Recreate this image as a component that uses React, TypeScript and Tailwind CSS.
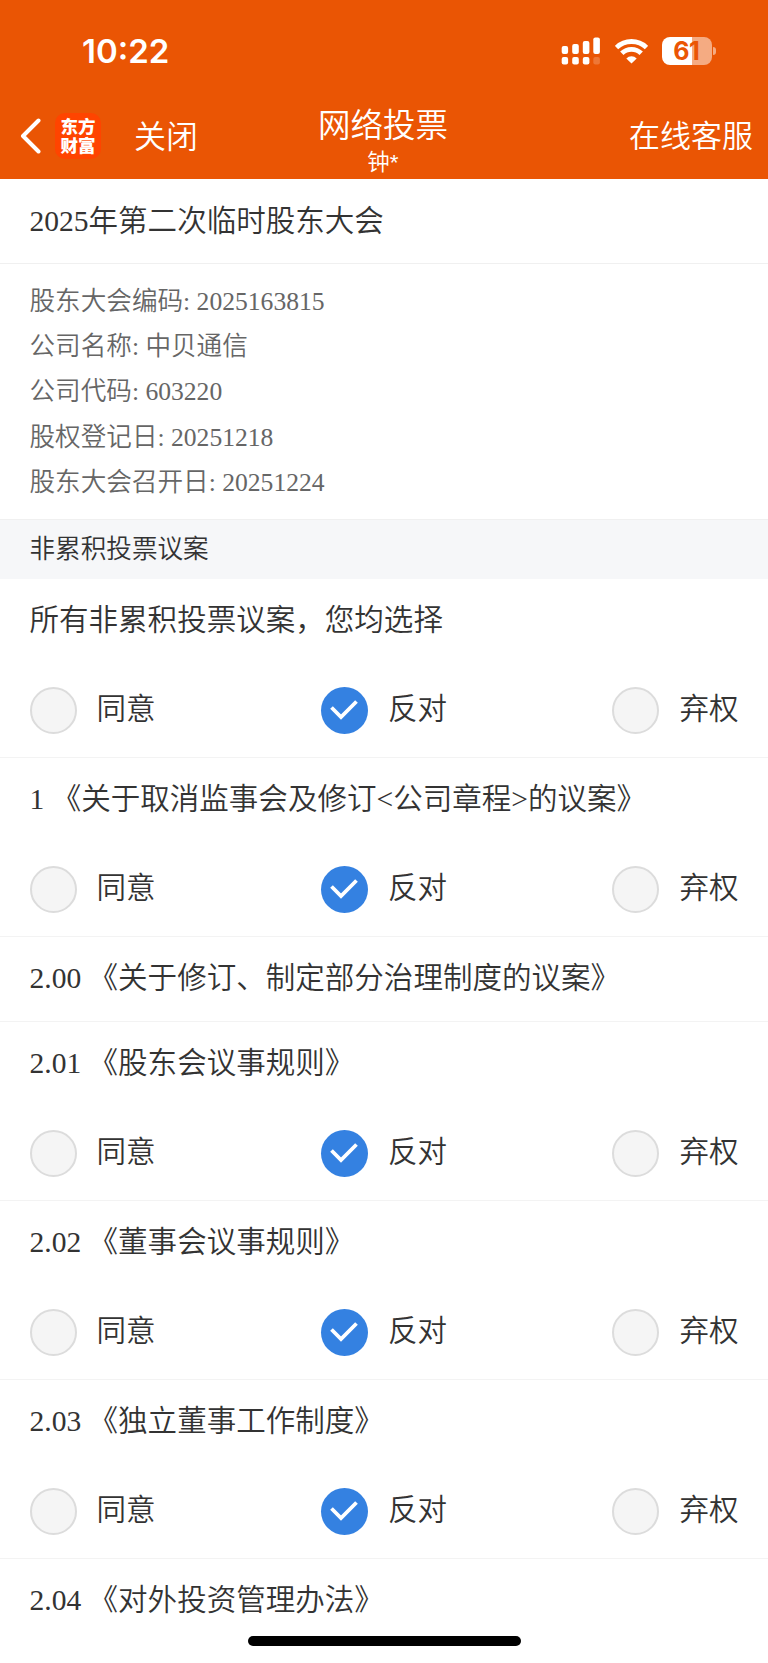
type Choice = 'agree' | 'against' | 'abstain';

type Proposal = {
  id: string;
  title: string;
  choice?: Choice;
};

const choices: Array<{ value: Choice; label: string }> = [
  { value: 'agree', label: '同意' },
  { value: 'against', label: '反对' },
  { value: 'abstain', label: '弃权' },
];

const meetingInfo = [
  { label: '股东大会编码', value: '2025163815' },
  { label: '公司名称', value: '中贝通信' },
  { label: '公司代码', value: '603220' },
  { label: '股权登记日', value: '20251218' },
  { label: '股东大会召开日', value: '20251224' },
];

const proposals: Proposal[] = [
  { id: 'all', title: '所有非累积投票议案，您均选择', choice: 'against' },
  {
    id: '1',
    title: '1 《关于取消监事会及修订<公司章程>的议案》',
    choice: 'against',
  },
  { id: '2.00', title: '2.00 《关于修订、制定部分治理制度的议案》' },
  { id: '2.01', title: '2.01 《股东会议事规则》', choice: 'against' },
  { id: '2.02', title: '2.02 《董事会议事规则》', choice: 'against' },
  { id: '2.03', title: '2.03 《独立董事工作制度》', choice: 'against' },
  { id: '2.04', title: '2.04 《对外投资管理办法》' },
];

function SignalIcon() {
  return (
    <svg width="39" height="28" viewBox="0 0 39 28" fill="#fff">
      <rect x="0.7" y="9" width="6.4" height="8" rx="2" />
      <rect x="11.2" y="7" width="6.6" height="10" rx="2" />
      <rect x="21.8" y="4" width="6.6" height="13" rx="2" />
      <rect x="32.3" y="0.5" width="6.6" height="16.5" rx="2" />
      <rect x="0.7" y="20" width="6.4" height="7.6" rx="2" />
      <rect x="11.2" y="20" width="6.6" height="7.6" rx="2" />
      <rect x="21.8" y="20" width="6.6" height="7.6" rx="2" />
      <rect x="32.3" y="20" width="6.6" height="7.6" rx="2" opacity="0.2" />
    </svg>
  );
}

function WifiIcon() {
  return (
    <svg width="33" height="25" viewBox="0 0 33 25" fill="none" stroke="#fff">
      <path d="M1.5 8.6a21.5 21.5 0 0 1 30 0" strokeWidth="4.8" />
      <path d="M6.8 14.3a13.8 13.8 0 0 1 19.4 0" strokeWidth="4.8" />
      <path
        d="M16.5 24.6 11.3 19.4a7.4 7.4 0 0 1 10.4 0Z"
        fill="#fff"
        stroke="none"
      />
    </svg>
  );
}

function Battery() {
  return (
    <div className="flex items-center gap-[1.5px]">
      <div className="flex h-7 w-[49.5px] items-center justify-center rounded-[8px] bg-linear-to-r from-white from-61% to-[#f5ab82] to-61% pr-px font-['Inter',sans-serif] text-[25px] leading-7 font-bold tracking-[-0.5px] text-[#ea5504]">
        61
      </div>
      <div className="h-2 w-[3px] rounded-r-full bg-[#f5ab82]" />
    </div>
  );
}

function Header() {
  return (
    <header className="h-[179px] bg-[#ea5504] text-white">
      <div className="flex h-[93px] items-center justify-between pt-[9px] pr-[52px] pl-[82px]">
        <span className="font-['Inter',sans-serif] text-[33px] leading-10 font-semibold">
          10:22
        </span>
        <div className="flex items-center gap-[14.5px]">
          <SignalIcon />
          <WifiIcon />
          <Battery />
        </div>
      </div>
      <div className="grid h-[86px] grid-cols-[1fr_auto_1fr] pr-[15px] pl-5 font-[350]">
        <div className="flex h-[86px] items-center">
          <svg
            width="21"
            height="36"
            viewBox="0 0 21 36"
            fill="none"
            stroke="#fff"
            strokeWidth="4"
            strokeLinecap="round"
            strokeLinejoin="round"
          >
            <path d="M18.5 2.5 3 18l15.5 15.5" />
          </svg>
          <div className="ml-[14px] flex h-[46px] w-[46px] flex-col items-center justify-center rounded-[10px] bg-[#ff4400] pt-px text-[17.5px] leading-[19px] font-black">
            <span>东方</span>
            <span>财富</span>
          </div>
          <span className="mt-px ml-[33px] text-[32px] leading-9">关闭</span>
        </div>
        <div className="mr-[7px] flex flex-col items-center pt-[13px]">
          <h1 className="text-[32.5px] leading-10 font-[350]">网络投票</h1>
          <span className="text-[22.5px] leading-[33px]">钟*</span>
        </div>
        <span className="mt-[26px] justify-self-end text-[31px] leading-9">
          在线客服
        </span>
      </div>
    </header>
  );
}

function ChoiceRow({ selected }: { selected: Choice }) {
  return (
    <div className="flex h-[94.4px] justify-between pt-6">
      {choices.map((choice) => (
        <div className="flex h-[47px] items-center" key={choice.value}>
          {choice.value === selected ? (
            <span className="flex h-[47px] w-[47px] items-center justify-center rounded-full bg-[#3481e1]">
              <svg
                width="28"
                height="20"
                viewBox="0 0 28 20"
                fill="none"
                stroke="#fff"
                strokeWidth="3.8"
              >
                <path d="M1.5 7.5 11 17 26.5 1.5" />
              </svg>
            </span>
          ) : (
            <span className="h-[47px] w-[47px] rounded-full border-2 border-[#dcdcdc] bg-[#f5f5f5]" />
          )}
          <span className="mb-0.5 ml-[20px] leading-[43px]">{choice.label}</span>
        </div>
      ))}
    </div>
  );
}

export default function App() {
  return (
    <div className="relative h-[1663px] w-[768px] overflow-hidden bg-white font-['Liberation_Sans','Noto_Sans_CJK_SC',sans-serif]">
      <Header />
      <main className="font-['Liberation_Serif','Noto_Sans_CJK_SC',sans-serif] text-[29.54px] font-[350] text-[#333]">
        <h2 className="h-[84.7px] border-b-[1.5px] border-[#f0f0f0] px-[29.5px] leading-[84px] font-[350]">
          2025年第二次临时股东大会
        </h2>
        <dl className="h-[256px] border-b-[1.5px] border-[#f0f0f0] px-[29.5px] pt-[15px] text-[25.6px] leading-[45.3px] text-[#666]">
          {meetingInfo.map((row) => (
            <div className="flex gap-[6.4px]" key={row.label}>
              <dt>{row.label}:</dt>
              <dd>{row.value}</dd>
            </div>
          ))}
        </dl>
        <h3 className="h-[59.3px] bg-[#f6f7f9] px-[29.5px] text-[25.6px] leading-[60px] font-[350]">
          非累积投票议案
        </h3>
        {proposals.map((proposal) => (
          <section
            className="border-b-[1.5px] border-[#f3f3f3] px-[29.5px] last:border-b-0"
            key={proposal.id}
          >
            <p className="h-[83.7px] leading-[83px]">{proposal.title}</p>
            {proposal.choice && <ChoiceRow selected={proposal.choice} />}
          </section>
        ))}
      </main>
      {/* home indicator floats over the list */}
      <div className="absolute bottom-[17px] left-[247.5px] h-[10px] w-[273.5px] rounded-full bg-black" />
    </div>
  );
}
